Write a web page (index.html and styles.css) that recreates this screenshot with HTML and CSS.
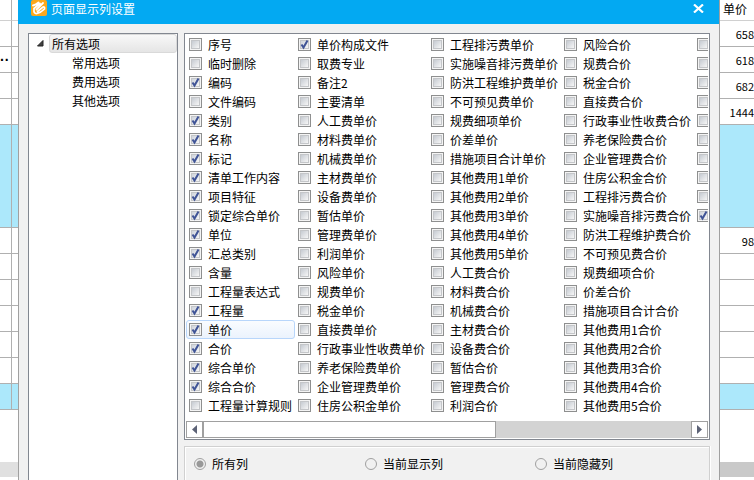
FILE: index.html
```html
<!DOCTYPE html>
<html lang="zh-CN">
<head>
    <meta charset="UTF-8">
    <meta name="viewport" content="width=device-width, initial-scale=1.0">
    <title>页面显示列设置</title>
    <link rel="stylesheet" href="styles.css">
</head>
<body>
    <div class="sheet sheet-left">
        <table>
            <tr class="head"><td></td><td></td></tr>
            <tr><td></td><td></td></tr>
            <tr><td class="more">··</td><td></td></tr>
            <tr><td></td><td></td></tr>
            <tr><td></td><td></td></tr>
            <tr class="marked tall"><td></td><td></td></tr>
            <tr><td></td><td></td></tr>
            <tr><td></td><td></td></tr>
            <tr><td></td><td></td></tr>
            <tr><td></td><td></td></tr>
            <tr><td></td><td></td></tr>
            <tr><td></td><td></td></tr>
            <tr class="marked"><td></td><td></td></tr>
        </table>
        <div class="sheet-bar"></div>
    </div>

    <main class="dialog">
        <header class="title-bar">
            <svg class="logo" width="16" height="16" viewBox="0 0 16 16">
                <rect width="16" height="16" rx="2" fill="#fba81c"/>
                <path d="M2 5.500Q5 5 7.500 2.500M3 8.500L9 3.500M5.500 9.500L12 3" stroke="#fff" stroke-width="1.800" fill="none" stroke-linecap="round"/>
                <path d="M3 9.500Q2.500 14 6 13.500Q10 12.500 13.500 9Q14 6.500 12 7L6.500 11.500" stroke="#fff" stroke-width="1.700" fill="none" stroke-linecap="round"/>
            </svg>
            <h1>页面显示列设置</h1>
            <button class="close" aria-label="关闭">
                <svg width="11" height="9" viewBox="0 0 11 9"><path d="M1 0.500L10 8.500M10 0.500L1 8.500" stroke="#fff" stroke-width="2.200"/></svg>
            </button>
        </header>

        <div class="content">
            <nav class="tree">
                <div class="tree-root">
                    <svg class="arrow" width="7" height="7" viewBox="0 0 7 7"><path d="M6 0.500V6H0.500Z" fill="#404040" stroke="#262626"/></svg>
                    <button class="node selected">所有选项</button>
                </div>
                <div class="tree-children">
                    <button class="node">常用选项</button>
                    <button class="node">费用选项</button>
                    <button class="node">其他选项</button>
                </div>
            </nav>

            <div class="right">
                <section class="list">
                    <div class="columns">
                        <div class="column first">
                            <label class="item"><input type="checkbox">序号</label>
                            <label class="item"><input type="checkbox">临时删除</label>
                            <label class="item"><input type="checkbox" checked>编码</label>
                            <label class="item"><input type="checkbox">文件编码</label>
                            <label class="item"><input type="checkbox" checked>类别</label>
                            <label class="item"><input type="checkbox" checked>名称</label>
                            <label class="item"><input type="checkbox" checked>标记</label>
                            <label class="item"><input type="checkbox" checked>清单工作内容</label>
                            <label class="item"><input type="checkbox" checked>项目特征</label>
                            <label class="item"><input type="checkbox" checked>锁定综合单价</label>
                            <label class="item"><input type="checkbox" checked>单位</label>
                            <label class="item"><input type="checkbox" checked>汇总类别</label>
                            <label class="item"><input type="checkbox">含量</label>
                            <label class="item"><input type="checkbox">工程量表达式</label>
                            <label class="item"><input type="checkbox" checked>工程量</label>
                            <label class="item active"><input type="checkbox" checked>单价</label>
                            <label class="item"><input type="checkbox" checked>合价</label>
                            <label class="item"><input type="checkbox" checked>综合单价</label>
                            <label class="item"><input type="checkbox" checked>综合合价</label>
                            <label class="item"><input type="checkbox">工程量计算规则</label>
                        </div>
                        <div class="column">
                            <label class="item"><input type="checkbox" checked>单价构成文件</label>
                            <label class="item"><input type="checkbox">取费专业</label>
                            <label class="item"><input type="checkbox">备注2</label>
                            <label class="item"><input type="checkbox">主要清单</label>
                            <label class="item"><input type="checkbox">人工费单价</label>
                            <label class="item"><input type="checkbox">材料费单价</label>
                            <label class="item"><input type="checkbox">机械费单价</label>
                            <label class="item"><input type="checkbox">主材费单价</label>
                            <label class="item"><input type="checkbox">设备费单价</label>
                            <label class="item"><input type="checkbox">暂估单价</label>
                            <label class="item"><input type="checkbox">管理费单价</label>
                            <label class="item"><input type="checkbox">利润单价</label>
                            <label class="item"><input type="checkbox">风险单价</label>
                            <label class="item"><input type="checkbox">规费单价</label>
                            <label class="item"><input type="checkbox">税金单价</label>
                            <label class="item"><input type="checkbox">直接费单价</label>
                            <label class="item"><input type="checkbox">行政事业性收费单价</label>
                            <label class="item"><input type="checkbox">养老保险费单价</label>
                            <label class="item"><input type="checkbox">企业管理费单价</label>
                            <label class="item"><input type="checkbox">住房公积金单价</label>
                        </div>
                        <div class="column">
                            <label class="item"><input type="checkbox">工程排污费单价</label>
                            <label class="item"><input type="checkbox">实施噪音排污费单价</label>
                            <label class="item"><input type="checkbox">防洪工程维护费单价</label>
                            <label class="item"><input type="checkbox">不可预见费单价</label>
                            <label class="item"><input type="checkbox">规费细项单价</label>
                            <label class="item"><input type="checkbox">价差单价</label>
                            <label class="item"><input type="checkbox">措施项目合计单价</label>
                            <label class="item"><input type="checkbox">其他费用1单价</label>
                            <label class="item"><input type="checkbox">其他费用2单价</label>
                            <label class="item"><input type="checkbox">其他费用3单价</label>
                            <label class="item"><input type="checkbox">其他费用4单价</label>
                            <label class="item"><input type="checkbox">其他费用5单价</label>
                            <label class="item"><input type="checkbox">人工费合价</label>
                            <label class="item"><input type="checkbox">材料费合价</label>
                            <label class="item"><input type="checkbox">机械费合价</label>
                            <label class="item"><input type="checkbox">主材费合价</label>
                            <label class="item"><input type="checkbox">设备费合价</label>
                            <label class="item"><input type="checkbox">暂估合价</label>
                            <label class="item"><input type="checkbox">管理费合价</label>
                            <label class="item"><input type="checkbox">利润合价</label>
                        </div>
                        <div class="column">
                            <label class="item"><input type="checkbox">风险合价</label>
                            <label class="item"><input type="checkbox">规费合价</label>
                            <label class="item"><input type="checkbox">税金合价</label>
                            <label class="item"><input type="checkbox">直接费合价</label>
                            <label class="item"><input type="checkbox">行政事业性收费合价</label>
                            <label class="item"><input type="checkbox">养老保险费合价</label>
                            <label class="item"><input type="checkbox">企业管理费合价</label>
                            <label class="item"><input type="checkbox">住房公积金合价</label>
                            <label class="item"><input type="checkbox">工程排污费合价</label>
                            <label class="item"><input type="checkbox">实施噪音排污费合价</label>
                            <label class="item"><input type="checkbox">防洪工程维护费合价</label>
                            <label class="item"><input type="checkbox">不可预见费合价</label>
                            <label class="item"><input type="checkbox">规费细项合价</label>
                            <label class="item"><input type="checkbox">价差合价</label>
                            <label class="item"><input type="checkbox">措施项目合计合价</label>
                            <label class="item"><input type="checkbox">其他费用1合价</label>
                            <label class="item"><input type="checkbox">其他费用2合价</label>
                            <label class="item"><input type="checkbox">其他费用3合价</label>
                            <label class="item"><input type="checkbox">其他费用4合价</label>
                            <label class="item"><input type="checkbox">其他费用5合价</label>
                        </div>
                        <div class="column">
                            <label class="item"><input type="checkbox"></label>
                            <label class="item"><input type="checkbox"></label>
                            <label class="item"><input type="checkbox"></label>
                            <label class="item"><input type="checkbox"></label>
                            <label class="item"><input type="checkbox"></label>
                            <label class="item"><input type="checkbox"></label>
                            <label class="item"><input type="checkbox"></label>
                            <label class="item"><input type="checkbox"></label>
                            <label class="item"><input type="checkbox"></label>
                            <label class="item"><input type="checkbox" checked></label>
                        </div>
                    </div>
                    <div class="scrollbar">
                        <button class="scroll-button" aria-label="向左"><svg width="5" height="9" viewBox="0 0 5 9"><path d="M5 0V9L0 4.500Z" fill="#5c6276"/></svg></button>
                        <div class="track"><div class="thumb"></div></div>
                        <button class="scroll-button" aria-label="向右"><svg width="5" height="9" viewBox="0 0 5 9"><path d="M0 0V9L5 4.500Z" fill="#5c6276"/></svg></button>
                    </div>
                </section>

                <section class="filter">
                    <label><input type="radio" name="filter" checked>所有列</label>
                    <label><input type="radio" name="filter">当前显示列</label>
                    <label><input type="radio" name="filter">当前隐藏列</label>
                </section>
            </div>
        </div>
    </main>

    <div class="sheet sheet-right">
        <table>
            <tr class="head"><th>单价</th></tr>
            <tr><td>658</td></tr>
            <tr><td>618</td></tr>
            <tr><td>682</td></tr>
            <tr><td>1444</td></tr>
            <tr class="marked tall"><td></td></tr>
            <tr><td>98</td></tr>
            <tr><td></td></tr>
            <tr><td></td></tr>
            <tr><td></td></tr>
            <tr><td></td></tr>
            <tr><td></td></tr>
            <tr class="marked"><td></td></tr>
        </table>
        <div class="sheet-bar"></div>
    </div>
</body>
</html>
```
FILE: styles.css
```css
* {
    box-sizing: border-box;
}
body {
    display: flex;
    height: 100vh;
    margin: 0;
    overflow: hidden;
    background-color: #fff;
    color: #000;
    font-family: "Noto Sans CJK SC", sans-serif;
    font-size: 12px;
    line-height: 18px;
}
button {
    padding: 0;
    border: none;
    background: none;
    color: inherit;
    font: inherit;
}
input {
    flex: none;
    appearance: none;
    margin: 0;
}

/* spreadsheet behind the dialog */
.sheet {
    display: flex;
    flex-direction: column;
    flex: none;
    overflow: hidden;
}
.sheet-left {
    width: 18px;
}
.sheet-right {
    width: 34px;
}
.sheet table {
    width: 100%;
    border-collapse: separate;
    border-spacing: 0;
    table-layout: fixed;
}
.sheet th,
.sheet td {
    height: 26px;
    padding: 0;
    border-bottom: 1px solid #b0b0b0;
    font-weight: normal;
    white-space: nowrap;
}
.sheet .head th,
.sheet .head td {
    height: 21px;
    padding-bottom: 2px;
    border-bottom-color: #d0d0d0;
}
.sheet .tall td {
    height: 103px;
}
.sheet .marked td {
    background-color: #ace8fb;
}
.sheet-left td:first-child {
    width: 12px;
    border-right: 1px solid #b0b0b0;
}
.sheet-left .more {
    font-family: "Liberation Sans", sans-serif;
    font-size: 14px;
    font-weight: bold;
}
.sheet-right th {
    padding-left: 3px;
    line-height: 16px;
    text-align: left;
}
.sheet-right td {
    font-size: 11px;
    text-align: right;
}
.sheet-bar {
    height: 15px;
    margin-top: 52px;
    background-color: #e0e0e0;
}
.sheet-right .sheet-bar {
    background-color: #c9c9c9;
}

.dialog {
    display: flex;
    flex-direction: column;
    flex: 1;
    min-width: 0;
    border: 1px solid #a0a0a0;
    border-width: 0 1px;
    background-color: #f1f1f1;
}
.title-bar {
    display: flex;
    flex: none;
    height: 24px;
    margin-left: -1px;
    padding: 0 15px 8px 13px;
    align-items: center;
    background-color: #03a9f2;
    color: #fff;
}
.title-bar h1 {
    flex: 1;
    margin: 2px 0 0 4px;
    font-size: 12px;
    font-weight: normal;
}
.close {
    display: flex;
}
.content {
    display: flex;
    flex: 1;
    gap: 6px;
    min-height: 0;
    padding: 9px 9px 0;
}

.tree {
    flex: none;
    width: 150px;
    border: 1px solid #828790;
    border-bottom: none;
    background-color: #fff;
}
.tree-root {
    display: flex;
    align-items: center;
    gap: 5px;
    padding-left: 8px;
}
.node {
    display: block;
    height: 19px;
    padding: 0 3px;
    text-align: left;
}
.node.selected {
    flex: 1;
    padding: 0 2px;
    border: 1px solid #d9d9d9;
    border-radius: 3px;
    background: linear-gradient(#f8f8f8, #e5e5e5);
    line-height: 17px;
}
.tree-children {
    padding-left: 40px;
}

.right {
    display: flex;
    flex-direction: column;
    flex: 1;
    gap: 6px;
    min-width: 0;
}
.list {
    flex: none;
    padding: 1px;
    border: 1px solid #828790;
    background-color: #fff;
}
.columns {
    display: flex;
    height: 386px;
    overflow: hidden;
}
.column {
    flex: none;
    width: 133px;
}
.column.first {
    width: 109px;
}
.item {
    display: flex;
    align-items: center;
    gap: 6px;
    height: 19px;
    padding: 0 2px;
    border: 1px solid transparent;
    border-radius: 3px;
    line-height: 17px;
    white-space: nowrap;
}
.item.active {
    border-color: #b8d6fb;
    background: linear-gradient(#fafcff, #ebf3fd);
}
.item input {
    width: 13px;
    height: 13px;
    border: 1px solid #8e8f8f;
    background: linear-gradient(135deg, #c6cbd2, #f6f6f6) center / 7px 7px no-repeat, linear-gradient(#c4c6c9, #c4c6c9) center / 9px 9px no-repeat, #f4f4f4;
}
.item input:checked {
    background: url("data:image/svg+xml,%3Csvg xmlns='http://www.w3.org/2000/svg' viewBox='0 0 11 11'%3E%3Cpath d='M2.500 5.500L4.500 8.500L8.500 1.500' fill='none' stroke='%23405496' stroke-width='2'/%3E%3C/svg%3E") center / 11px 11px no-repeat, linear-gradient(135deg, #cfd4dc, #f6f6f6) center / 7px 7px no-repeat, linear-gradient(#c4c6c9, #c4c6c9) center / 9px 9px no-repeat, #f4f4f4;
}

.scrollbar {
    display: flex;
    height: 17px;
    background-color: #d3d3d3;
}
.scroll-button {
    display: flex;
    flex: none;
    width: 17px;
    align-items: center;
    justify-content: center;
    border: 1px solid #a0a0a0;
    background-color: #fff;
}
.track {
    display: flex;
    flex: 1;
}
.thumb {
    width: 60%;
    border: 1px solid #a0a0a0;
    background-color: #fff;
}

.filter {
    display: grid;
    flex: 1;
    grid-template-columns: 171px 170px 1fr;
    padding: 8px 9px;
    border: 1px solid #d0d0d0;
    border-bottom: none;
    box-shadow: inset 1px 1px #fff, 1px 0 #fff;
}
.filter label {
    display: flex;
    gap: 6px;
    height: 18px;
    align-items: center;
}
.filter input {
    width: 12px;
    height: 12px;
    border: 1px solid #a0a0a0;
    border-radius: 50%;
}
.filter input:checked {
    background: radial-gradient(#999 3px, #f1f1f1 4px);
}
```
